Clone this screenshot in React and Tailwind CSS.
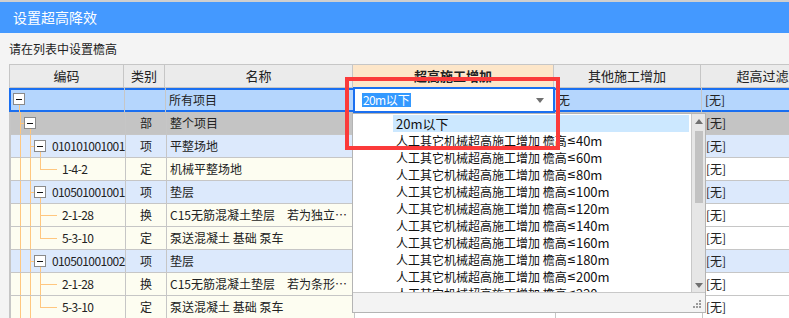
const rows = [
  { lvl: 0, code: '', cat: '', name: '所有项目', c5: '无', c6: '[无]', tone: 'sel' },
  { lvl: 1, code: '', cat: '部', name: '整个项目', c5: '', c6: '[无]', tone: 'gray' },
  { lvl: 2, code: '010101001001', cat: '项', name: '平整场地', c5: '', c6: '[无]', tone: 'blue' },
  { lvl: 3, last: true, code: '1-4-2', cat: '定', name: '机械平整场地', c5: '', c6: '[无]', tone: 'leaf' },
  { lvl: 2, code: '010501001001', cat: '项', name: '垫层', c5: '', c6: '[无]', tone: 'blue' },
  { lvl: 3, code: '2-1-28', cat: '换', name: 'C15无筋混凝土垫层　若为独立…', c5: '', c6: '[无]', tone: 'leaf' },
  { lvl: 3, last: true, code: '5-3-10', cat: '定', name: '泵送混凝土 基础 泵车', c5: '', c6: '[无]', tone: 'leaf' },
  { lvl: 2, code: '010501001002', cat: '项', name: '垫层', c5: '', c6: '[无]', tone: 'blue' },
  { lvl: 3, code: '2-1-28', cat: '换', name: 'C15无筋混凝土垫层　若为条形…', c5: '', c6: '[无]', tone: 'leaf' },
  { lvl: 3, last: true, code: '5-3-10', cat: '定', name: '泵送混凝土 基础 泵车', c5: '', c6: '[无]', tone: 'leaf' },
]

const heights = ['40m', '60m', '80m', '100m', '120m', '140m', '160m', '180m', '200m', '220m']

const toneLeft = {
  sel: 'bg-transparent',
  gray: 'bg-[#c4c4c4]',
  blue: 'bg-[#dce9fc]',
  leaf: 'bg-[#fdfdf1]',
}

const toneRight = {
  sel: 'bg-transparent',
  gray: 'bg-[#c4c4c4]',
  blue: 'bg-[#dce9fc]',
  leaf: 'bg-white',
}

// codes are drawn in a fixed 6px-per-char look, like the bitmap font of the original
const codeFont = 'text-[12px] tracking-[-0.6px]'

function MinusBox({ className }) {
  return (
    <span className={`absolute flex h-[12px] w-[12px] items-center justify-center border border-[#8a8a8a] bg-white ${className}`}>
      <span className="h-px w-[6px] bg-[#111]" />
    </span>
  )
}

function TreeCell({ row }) {
  const line = 'absolute w-px bg-[#ffc77f]'
  const hline = 'absolute h-px bg-[#ffc77f] top-[11px]'

  return (
    <div className={`relative h-full w-[115px] shrink-0 border-r border-[#c6c6c6] ${toneLeft[row.tone]}`}>
      {row.lvl === 0 ? (
        <>
          <span className={`${line} left-[9px] top-[17px] bottom-0`} />
          <MinusBox className="left-[3px] top-[5px]" />
        </>
      ) : null}

      {row.lvl === 1 ? (
        <>
          <span className={`${line} left-[9px] top-0 bottom-0`} />
          <span className={`${hline} left-[9px] w-[4px]`} />
          <span className={`${line} left-[19px] top-[17px] bottom-0`} />
          <MinusBox className="left-[13px] top-[5px]" />
        </>
      ) : null}

      {row.lvl === 2 ? (
        <>
          <span className={`${line} left-[9px] top-0 bottom-0`} />
          <span className={`${line} left-[19px] top-0 bottom-0`} />
          <span className={`${hline} left-[19px] w-[4px]`} />
          <span className={`${line} left-[29px] top-[17px] bottom-0`} />
          <MinusBox className="left-[23px] top-[5px]" />
          <span className={`absolute left-[41px] top-0 flex h-full items-center text-[#222] ${codeFont}`}>{row.code}</span>
        </>
      ) : null}

      {row.lvl === 3 ? (
        <>
          <span className={`${line} left-[9px] top-0 bottom-0`} />
          <span className={`${line} left-[19px] top-0 bottom-0`} />
          <span className={`${line} left-[29px] top-0 ${row.last ? 'h-[12px]' : 'bottom-0'}`} />
          <span className={`${hline} left-[29px] w-[17px]`} />
          <span className={`absolute left-[51px] top-0 flex h-full items-center text-[#222] ${codeFont}`}>{row.code}</span>
        </>
      ) : null}
    </div>
  )
}

function Triangle({ up, className }) {
  return (
    <svg width="8" height="5" viewBox="0 0 8 5" className={className}>
      <polygon points={up ? '0,5 8,5 4,0' : '0,0 8,0 4,5'} fill="#707070" />
    </svg>
  )
}

export default function App() {
  return (
    <div className="relative h-[318px] w-[789px] overflow-hidden bg-[#f4f4f4] font-['Noto_Sans_CJK_SC','Noto_Sans',sans-serif] text-[#222]">
      <div className="h-[2px] bg-[#cfcfcf]" />
      <div className="flex h-[31px] items-center bg-[#4499ff] pl-[13px] text-[14px] text-white">设置超高降效</div>
      <div className="flex h-[31px] items-center pl-[9px] text-[12px] text-[#222]">请在列表中设置檐高</div>

      <div className="ml-[9px] w-[900px]">
        <div className="flex h-[24px] border-y border-l border-[#c6c6c6] bg-[#ebebeb] text-[13px] text-[#222]">
          <div className="flex w-[114px] shrink-0 items-center justify-center border-r border-[#c6c6c6]">编码</div>
          <div className="flex w-[41px] shrink-0 items-center justify-center border-r border-[#c6c6c6]">类别</div>
          <div className="flex w-[188px] shrink-0 items-center justify-center border-r border-[#c6c6c6]">名称</div>
          <div className="flex w-[201px] shrink-0 items-center justify-center border-r border-[#c6c6c6] bg-[#fde6c9] font-bold">超高施工增加</div>
          <div className="flex w-[147px] shrink-0 items-center justify-center border-r border-[#c6c6c6]">其他施工增加</div>
          <div className="flex w-[150px] shrink-0 items-center justify-center border-r border-[#c6c6c6]">超高过滤类别</div>
        </div>

        {rows.map((row, index) => (
          <div
            key={index}
            className={[
              'flex text-[12px]',
              index === 0
                ? 'h-[24px] bg-[#b5d6fd] ring-2 ring-inset ring-[#1a6ff0]'
                : 'h-[23px] border-b border-l-2 border-[#c6c6c6]',
            ].join(' ')}
          >
            {index === 0 ? <div className="w-px shrink-0" /> : null}
            <TreeCell row={row} />
            <div className={`flex w-[41px] shrink-0 items-center justify-center border-r border-[#c6c6c6] ${toneLeft[row.tone]}`}>{row.cat}</div>
            <div className={`flex w-[188px] shrink-0 items-center overflow-hidden whitespace-nowrap border-r border-[#c6c6c6] pl-[3px] ${toneLeft[row.tone]}`}>{row.name}</div>
            <div className={`w-[201px] shrink-0 border-r border-[#c6c6c6] ${toneRight[row.tone]}`} />
            <div className={`flex w-[147px] shrink-0 items-center border-r border-[#c6c6c6] pl-[3px] ${toneRight[row.tone]}`}>{row.c5}</div>
            <div className={`flex w-[150px] shrink-0 items-center border-r border-[#c6c6c6] pl-[3px] ${toneRight[row.tone]}`}>{row.c6}</div>
          </div>
        ))}
      </div>

      {/* in-cell editor */}
      <div className="absolute left-[353px] top-[87px] flex h-[26px] w-[202px] items-center border-2 border-[#1a6ff0] bg-white pl-[7px] pr-[9px]">
        <span className="flex h-[14px] items-center bg-[#3399ff] px-px text-[12px] leading-[14px] text-white">
          <span className="tracking-[-0.6px]">20m</span>
          <span>以下</span>
        </span>
        <Triangle className="ml-auto" />
      </div>

      {/* dropdown list */}
      <div className="absolute left-[352px] top-[113px] flex h-[200px] w-[354px] flex-col border border-[#b4b4b4] bg-white">
        <div className="flex min-h-0 flex-1">
          <div className="flex-1 overflow-hidden pt-px text-[13px] leading-[14px] text-[#111]">
            <div className="ml-[40px] mr-[2px] flex h-[17px] items-center whitespace-nowrap bg-[#cce8ff] pl-[3px]">20m以下</div>
            {heights.map((h) => (
              <div key={h} className="ml-[40px] mr-[2px] flex h-[17px] items-center whitespace-nowrap pl-[3px]">
                <span className="text-[12px]">人工其它机械超高施工增加&nbsp;檐高</span>
                <span className="font-['DejaVu_Sans',sans-serif] text-[11px]">≤</span>
                <span>{h}</span>
              </div>
            ))}
          </div>
          <div className="flex w-[14px] shrink-0 flex-col items-center border-l border-[#c8c8c8] bg-[#e6e6e6]">
            <div className="flex h-[14px] items-center justify-center">
              <Triangle up />
            </div>
            <div className="mt-[3px] h-[72px] w-[8px] bg-[#c2c2c2]" />
            <div className="mt-auto flex h-[14px] items-center justify-center">
              <Triangle />
            </div>
          </div>
        </div>
        <div className="flex h-[20px] shrink-0 items-end justify-end border-t border-[#c8c8c8] bg-[#f3f3f3] pb-[4px] pr-[4px]">
          <svg width="8" height="8" viewBox="0 0 8 8">
            <rect x="6" y="0" width="2" height="2" fill="#9a9a9a" />
            <rect x="3" y="3" width="2" height="2" fill="#9a9a9a" />
            <rect x="6" y="3" width="2" height="2" fill="#9a9a9a" />
            <rect x="0" y="6" width="2" height="2" fill="#9a9a9a" />
            <rect x="3" y="6" width="2" height="2" fill="#9a9a9a" />
            <rect x="6" y="6" width="2" height="2" fill="#9a9a9a" />
          </svg>
        </div>
      </div>

      {/* red highlight frame */}
      <div className="absolute left-[345px] top-[77px] h-[73px] w-[215px] border-4 border-[#fb3a3a]" />
    </div>
  )
}
